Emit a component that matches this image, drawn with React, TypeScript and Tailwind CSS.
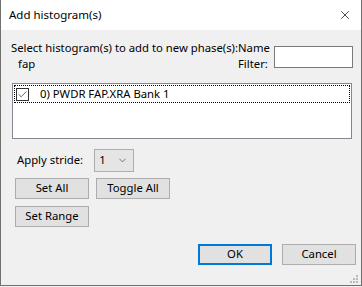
import { ChevronDown, X, Check } from "lucide-react";

const font = { fontFamily: '"Segoe UI", "Noto Sans", "Liberation Sans", sans-serif' };

function Btn({ label, primary, className }: { label: string; primary?: boolean; className?: string }) {
  return (
    <button
      className={`h-[21px] w-[74px] flex items-center justify-center bg-[#e1e1e1] text-[11.3px] text-black ${
        primary ? "border-2 border-[#0078d7]" : "border border-[#adadad]"
      } ${className ?? ""}`}
    >
      {label}
    </button>
  );
}

export default function App() {
  return (
    <div className="w-[362px] h-[287px] bg-[#f0f0f0]" style={font}>
      <div className="w-[362px] h-[286px] flex flex-col border-x border-b border-[#707070] bg-[#f0f0f0]">
        {/* Title bar */}
        <div className="h-[30px] shrink-0 bg-white flex items-center justify-between pl-[8px] pr-[8px]">
          <span className="text-[11.5px] text-black leading-none">Add histogram(s)</span>
          <X className="w-[14px] h-[14px] text-black mr-[1px]" strokeWidth={1.2} />
        </div>

        <div className="flex-1 flex flex-col px-[10px] text-[11.3px] text-black">
          {/* Header */}
          <div className="flex mt-[10px] h-[40px]">
            <div className="flex flex-col leading-[16px] w-[227px] whitespace-nowrap">
              <span>Select histogram(s) to add to new phase(s):</span>
              <span className="pl-[7px]">fap</span>
            </div>
            <div className="flex flex-col leading-[16px] whitespace-nowrap">
              <span>Name</span>
              <span>Filter:</span>
            </div>
            <input className="ml-[4px] mt-[6px] w-[79px] h-[22px] bg-white border border-[#7a7a7a] outline-none" />
          </div>

          {/* List box */}
          <div className="mt-[3px] ml-[1px] w-[340px] h-[56px] bg-white border border-[#828790] p-[1px]">
            <div className="h-[18px] flex items-center border border-dotted border-black">
              <div className="ml-[1px] w-[13px] h-[13px] border border-[#333] flex items-center justify-center bg-white">
                <Check className="w-[11px] h-[11px] text-[#555]" strokeWidth={2} />
              </div>
              <span className="ml-[11px]">0) PWDR FAP.XRA Bank 1</span>
            </div>
          </div>

          {/* Stride */}
          <div className="flex items-center mt-[10px] ml-[6px]">
            <span>Apply stride:</span>
            <div className="ml-[11px] w-[40px] h-[23px] border border-[#adadad] bg-[#e5e5e5] flex items-center justify-between pl-[4px] pr-[5px]">
              <span>1</span>
              <ChevronDown className="w-[11px] h-[11px] text-[#444]" strokeWidth={1.5} />
            </div>
          </div>

          <div className="flex gap-[7px] mt-[6px] ml-[4px]">
            <Btn label="Set All" />
            <Btn label="Toggle All" />
          </div>
          <div className="flex mt-[7px] ml-[4px]">
            <Btn label="Set Range" />
          </div>

          <div className="flex justify-end gap-[10px] mt-[17px] mr-[-5px]">
            <Btn label="OK" primary className="w-[73px] h-[21px]" />
            <Btn label="Cancel" className="w-[74px]" />
          </div>

          {/* Resize grip */}
          <div className="flex-1 flex items-end justify-end mr-[-7px] mb-[2px]">
            <svg width="8" height="8" viewBox="0 0 8 8">
              <rect x="6" y="0" width="2" height="2" fill="#b8b8b8" />
              <rect x="3" y="3" width="2" height="2" fill="#b8b8b8" />
              <rect x="6" y="3" width="2" height="2" fill="#b8b8b8" />
              <rect x="0" y="6" width="2" height="2" fill="#b8b8b8" />
              <rect x="3" y="6" width="2" height="2" fill="#b8b8b8" />
              <rect x="6" y="6" width="2" height="2" fill="#b8b8b8" />
            </svg>
          </div>
        </div>
      </div>
    </div>
  );
}
